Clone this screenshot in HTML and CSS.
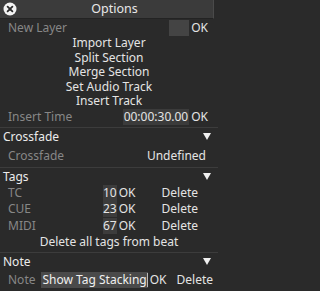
FILE: index.html
```html
<!DOCTYPE html>
<html>
<head>
<meta charset="utf-8">
<link rel="stylesheet" href="styles.css">
</head>
<body>
<div class="panel">
  <div class="title">
    <span class="close"><svg width="14" height="14" viewBox="0 0 14 14"><circle cx="7" cy="7" r="6.5" fill="#f2f2f2"/><path d="M4.6 4.6 L9.4 9.4 M9.4 4.6 L4.6 9.4" stroke="#2b2b2b" stroke-width="1.8" stroke-linecap="round"/></svg></span>
    <span class="title-text">Options</span>
    <span></span>
  </div>
  <div class="row r-newlayer">
    <span class="label">New Layer</span>
    <span class="spacer"></span>
    <span class="box box-empty"></span>
    <span class="ok">OK</span>
  </div>
  <div class="menu">
    <div class="item">Import Layer</div>
    <div class="item">Split Section</div>
    <div class="item">Merge Section</div>
    <div class="item">Set Audio Track</div>
    <div class="item">Insert Track</div>
  </div>
  <div class="row r-time">
    <span class="label">Insert Time</span>
    <span class="spacer"></span>
    <span class="box box-time">00:00:30.00</span>
    <span class="ok">OK</span>
  </div>
  <div class="sep"></div>
  <div class="header h-cross"><span>Crossfade</span><span class="tri"></span></div>
  <div class="row r-cross">
    <span class="label">Crossfade</span>
    <span class="spacer"></span>
    <span class="value">Undefined</span>
  </div>
  <div class="sep"></div>
  <div class="header"><span>Tags</span><span class="tri"></span></div>
  <div class="tag-row">
    <span class="label">TC</span>
    <span class="box box-num">10</span>
    <span class="ok">OK</span>
    <span class="del">Delete</span>
  </div>
  <div class="tag-row">
    <span class="label">CUE</span>
    <span class="box box-num">23</span>
    <span class="ok">OK</span>
    <span class="del">Delete</span>
  </div>
  <div class="tag-row">
    <span class="label">MIDI</span>
    <span class="box box-num">67</span>
    <span class="ok">OK</span>
    <span class="del">Delete</span>
  </div>
  <div class="item item-all">Delete all tags from beat</div>
  <div class="sep"></div>
  <div class="header"><span>Note</span><span class="tri"></span></div>
  <div class="row r-note">
    <span class="label">Note</span>
    <span class="box box-note">Show Tag Stacking<span class="caret"></span></span>
    <span class="ok">OK</span>
    <span class="del del-note">Delete</span>
  </div>
</div>
</body>
</html>
```
FILE: styles.css
```css
html, body {
  margin: 0;
  padding: 0;
  background: #2a2a2a;
}
body {
  font-family: "Noto Sans", "Open Sans", sans-serif;
  font-size: 12px;
  color: #e4e4e4;
  width: 218px;
  height: 291px;
  overflow: hidden;
}
.panel {
  display: flex;
  flex-direction: column;
}
.title {
  display: grid;
  grid-template-columns: 20px 1fr 4px;
  align-items: center;
  height: 18px;
  background: #3b3b3b;
  border-right: 1px solid #4a4a4a;
  margin-right: 4px;
  border-bottom: 1px solid #232323;
}
.close {
  display: flex;
  padding-left: 3px;
}
.title-text {
  text-align: center;
  font-size: 12.5px;
  line-height: 18px;
  color: #e8e8e8;
}
.row {
  display: flex;
  align-items: center;
  height: 16px;
  padding: 0 10px 0 8px;
  line-height: 16px;
}
.r-newlayer {
  margin-top: 1px;
}
.label {
  color: #878787;
}
.spacer {
  flex: 1;
}
.box {
  display: inline-block;
  height: 16px;
  line-height: 16px;
  background: #3e3e3e;
  color: #e4e4e4;
}
.box-empty {
  width: 20px;
  background: #444;
}
.box-time {
  padding: 0 1px;
  background: #3b3b3b;
}
.ok {
  padding-left: 2px;
}
.menu {
  display: flex;
  flex-direction: column;
}
.item {
  text-align: center;
  height: 14.5px;
  line-height: 14.5px;
}
.sep {
  height: 1px;
  background: #3c3c3c;
  margin-top: 2px;
}
.header {
  display: flex;
  justify-content: space-between;
  align-items: center;
  height: 17px;
  line-height: 17px;
  padding: 0 7px 0 3px;
  color: #ececec;
}
.tri {
  width: 0;
  height: 0;
  border-left: 4px solid transparent;
  border-right: 4px solid transparent;
  border-top: 7px solid #f0f0f0;
}
.r-cross {
  margin-top: 2px;
  height: 18px;
  padding-right: 12px;
}
.tag-row {
  display: grid;
  grid-template-columns: 95px auto auto 1fr;
  align-items: center;
  height: 16.5px;
  line-height: 16px;
  padding-left: 8px;
}
.tag-row .box {
  justify-self: end;
}
.box-num {
  background: #3c3c3c;
}
.del {
  justify-self: start;
  padding-left: 26px;
}
.item-all {
  height: 16px;
  line-height: 16px;
}
.r-note {
  margin-top: 1px;
  height: 17px;
  padding-right: 5px;
}
.box-note {
  margin-left: 6px;
  padding-left: 1px;
  background: #4a4a4a;
  color: #f0f0f0;
  display: inline-flex;
  align-items: center;
}
.caret {
  width: 1px;
  height: 14px;
  background: #bbb;
}
.del-note {
  padding-left: 10px;
}
```
